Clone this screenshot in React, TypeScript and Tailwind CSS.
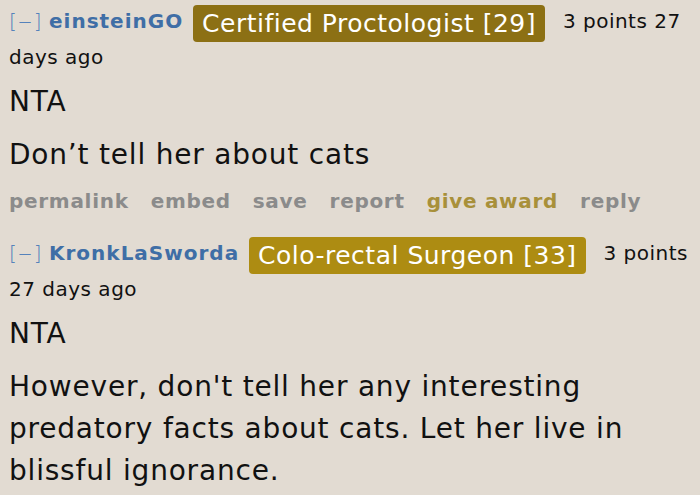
const comments = [
  {
    author: 'einsteinGO',
    flair: 'Certified Proctologist [29]',
    flairBg: 'bg-[#8c7014]',
    meta: '3 points 27 days ago',
    body: ['NTA', 'Don’t tell her about cats'],
    actions: true,
  },
  {
    author: 'KronkLaSworda',
    flair: 'Colo-rectal Surgeon [33]',
    flairBg: 'bg-[#ad8c12]',
    meta: '3 points 27 days ago',
    body: ['NTA', "However, don't tell her any interesting predatory facts about cats. Let her live in blissful ignorance."],
    actions: false,
  },
]

function Comment({ c }: { c: (typeof comments)[number] }) {
  return (
    <div className="mb-[21px]">
      {/* tagline */}
      <p className="text-[20px] leading-[31px] tracking-[0.5px]">
        <span className="font-['DejaVu_Sans',sans-serif] font-light text-[#5582bb]">
          [<span className="mx-[3px] inline-block scale-x-[1.4]">–</span>]
        </span>{' '}
        <span className="font-bold tracking-[1px] text-[#3f6ea6]">{c.author}</span>{' '}
        <span
          className={`${c.flairBg} mx-[3px] inline-block rounded-[4px] px-[9px] align-[-4px] text-[25px] leading-[37px] tracking-[0.5px] text-white`}
        >
          {c.flair}
        </span>{' '}
        <span className="ml-[8px]">{c.meta}</span>
      </p>

      {/* body */}
      <div className="mt-[8px] text-[28px] leading-[42px] tracking-[0.8px]">
        {c.body.map((t, i) => (
          <p key={i} className="mb-[11px] pr-[40px]">
            {t}
          </p>
        ))}
      </div>

      {c.actions && (
        <ul className="-mt-[1px] flex gap-[22px] text-[20px] font-bold tracking-[0.7px] text-[#8b8b8b]">
          <li>permalink</li>
          <li>embed</li>
          <li>save</li>
          <li>report</li>
          <li className="text-[#a8903a]">give award</li>
          <li>reply</li>
        </ul>
      )}
    </div>
  )
}

export default function App() {
  return (
    <div className="min-h-screen bg-[#e2dbd2] pl-[9px] pt-[5px] font-['DejaVu_Sans',Verdana,sans-serif] text-[#111]">
      {comments.map((c) => (
        <Comment key={c.author} c={c} />
      ))}
    </div>
  )
}
